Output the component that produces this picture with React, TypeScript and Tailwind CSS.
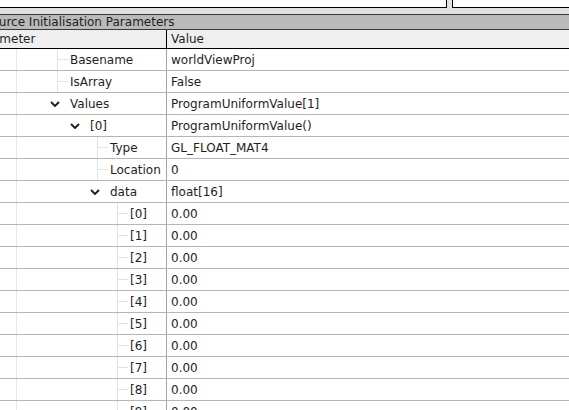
import React from 'react';

type Row = {
  name: string;
  value: string;
  depth: number;
  open?: boolean;
};

const rows: Row[] = [
  { name: 'Basename', value: 'worldViewProj', depth: 0 },
  { name: 'IsArray', value: 'False', depth: 0 },
  { name: 'Values', value: 'ProgramUniformValue[1]', depth: 0, open: true },
  { name: '[0]', value: 'ProgramUniformValue()', depth: 1, open: true },
  { name: 'Type', value: 'GL_FLOAT_MAT4', depth: 2 },
  { name: 'Location', value: '0', depth: 2 },
  { name: 'data', value: 'float[16]', depth: 2, open: true },
  ...Array.from({ length: 10 }, (_, i) => ({ name: `[${i}]`, value: '0.00', depth: 3 })),
];

// indent before the tree guide / chevron, per depth
const leafIndent = ['w-[40px]', 'w-[60px]', 'w-[80px]', 'w-[100px]'];
const openIndent = ['w-[33px]', 'w-[53px]', 'w-[73px]', 'w-[93px]'];

const Chevron = () => (
  <svg width="10" height="6" viewBox="0 0 10 6" className="shrink-0">
    <path d="M1 1 L5 5 L9 1" fill="none" stroke="#1e1e1e" strokeWidth="1.9" />
  </svg>
);

const TreeRow: React.FC<{ row: Row }> = ({ row }) => (
  <div className="flex h-[22px] border-b border-[#b6b6b6] bg-white">
    <div className="flex w-[167px] shrink-0 items-center border-r border-[#a4a4a4]">
      <div className="w-[16px] shrink-0" />
      <div className="w-px shrink-0 self-stretch bg-[#e8e8e8]" />
      {row.open ? (
        <>
          <div className={`${openIndent[row.depth]} shrink-0`} />
          <Chevron />
          <div className="w-[10px] shrink-0" />
        </>
      ) : (
        <>
          <div className={`${leafIndent[row.depth]} shrink-0`} />
          <div className="flex w-[13px] shrink-0 items-center self-stretch border-l border-[#e2e2e2]">
            <div className="h-px w-[10px] bg-[#e2e2e2]" />
          </div>
        </>
      )}
      <span className="whitespace-nowrap">{row.name}</span>
    </div>
    <div className="flex items-center whitespace-nowrap pl-[4px]">{row.value}</div>
  </div>
);

export default function App() {
  return (
    <div
      className="h-[410px] w-[569px] overflow-hidden bg-[#e0e0e0] text-[12px] text-[#1e1e1e]"
      style={{ fontFamily: '"DejaVu Sans", sans-serif' }}
    >
      {/* top edit boxes */}
      <div className="flex h-[8px]">
        <div className="w-[447px] border-r border-b border-black bg-white" />
        <div className="w-[5px]" />
        <div className="flex-1 border-l border-b border-black bg-white" />
      </div>
      <div className="h-[6px]" />

      {/* section title */}
      <div className="flex h-[16px] items-center overflow-hidden border-t border-b border-[#3a3a3a] bg-[#bababa]">
        <span className="-ml-[30px] whitespace-nowrap">Resource Initialisation Parameters</span>
      </div>

      {/* column header */}
      <div className="flex h-[19px] border-b border-black bg-[#efefef]">
        <div className="flex w-[167px] shrink-0 items-center overflow-hidden border-r border-black">
          <span className="-ml-[27px] whitespace-nowrap">Parameter</span>
        </div>
        <div className="flex items-center pl-[4px]">Value</div>
      </div>

      {rows.map((row, i) => (
        <TreeRow key={i} row={row} />
      ))}
    </div>
  );
}
